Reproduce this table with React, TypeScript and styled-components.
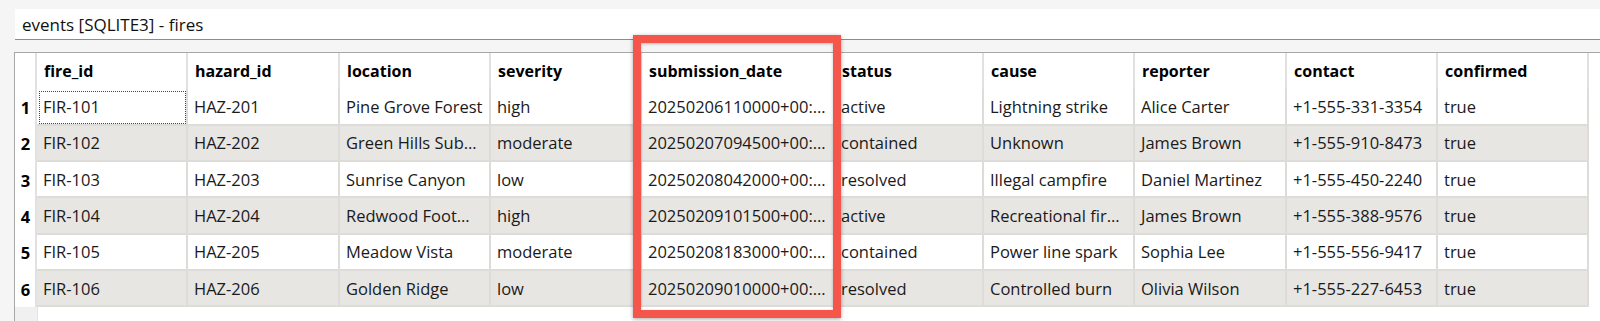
import React from "react";
import styled, { createGlobalStyle } from "styled-components";

const GlobalStyle = createGlobalStyle`
  html, body {
    margin: 0;
    padding: 0;
    background: #f5f5f5;
  }
  body {
    font-family: "Open Sans", "Noto Sans", Arial, sans-serif;
  }
`;

const Page = styled.div`
  position: relative;
  width: 1600px;
  height: 321px;
  overflow: hidden;
  padding-top: 9px;
  box-sizing: border-box;
  display: flex;
  flex-direction: column;
`;

const TitleBar = styled.div`
  margin-left: 15px;
  height: 31px;
  background: #ffffff;
  border-bottom: 1px solid #8c8c8c;
  box-sizing: border-box;
  padding-left: 7px;
  display: flex;
  align-items: center;
  font-size: 17px;
  color: #111;
`;

const TableFrame = styled.div`
  margin-top: 12px;
  margin-left: 14px;
  flex: 1;
  border-top: 1px solid #a7a7a7;
  border-left: 1px solid #a7a7a7;
  background: #ffffff;
  display: flex;
  flex-direction: column;
`;

const Grid = styled.div`
  display: grid;
  grid-template-columns: 22px 151px 152px 151px 151px 193px 149px 151px 152px 151px 151px;
  grid-auto-rows: 36.33px;
`;

const HeaderCell = styled.div`
  display: flex;
  align-items: center;
  padding: 0 7px;
  border-right: 2px solid #e1e1e1;
  box-sizing: border-box;
  font-weight: 700;
  font-size: 16px;
  color: #000;
  white-space: nowrap;
  overflow: hidden;
`;

const RowNumber = styled.div`
  display: flex;
  align-items: center;
  justify-content: center;
  padding-left: 1px;
  border-right: 2px solid #e1e1e1;
  box-sizing: border-box;
  font-weight: 700;
  font-size: 16.5px;
  color: #000;
  background: #ffffff;
`;

const Cell = styled.div<{ $striped: boolean; $focused?: boolean }>`
  display: flex;
  align-items: center;
  padding: 0 6px;
  box-sizing: border-box;
  background: ${(p) => (p.$striped ? "#e8e6e3" : "#ffffff")};
  border-right: 2px solid #dedcd9;
  border-bottom: 2px solid #dedcd9;
  font-size: 16.5px;
  color: #1a1a1a;
  white-space: nowrap;
  overflow: hidden;
  outline: ${(p) => (p.$focused ? "1px dotted #444" : "none")};
  outline-offset: -3px;
`;

const Filler = styled.div`
  flex: 1;
  display: flex;
`;

const FillerHeader = styled.div`
  width: 22px;
  background: #f0f0f0;
  border-right: 1px solid #e4e4e4;
`;

const Highlight = styled.div`
  position: absolute;
  left: 633px;
  top: 35px;
  width: 208px;
  height: 283px;
  box-sizing: border-box;
  border: 8px solid #f5564b;
  box-shadow: 0 1px 4px rgba(0, 0, 0, 0.35), inset 0 1px 3px rgba(0, 0, 0, 0.25);
  pointer-events: none;
`;

const columns = [
  "fire_id",
  "hazard_id",
  "location",
  "severity",
  "submission_date",
  "status",
  "cause",
  "reporter",
  "contact",
  "confirmed",
];

const rows = [
  ["FIR-101", "HAZ-201", "Pine Grove Forest", "high", "20250206110000+00:…", "active", "Lightning strike", "Alice Carter", "+1-555-331-3354", "true"],
  ["FIR-102", "HAZ-202", "Green Hills Sub…", "moderate", "20250207094500+00:…", "contained", "Unknown", "James Brown", "+1-555-910-8473", "true"],
  ["FIR-103", "HAZ-203", "Sunrise Canyon", "low", "20250208042000+00:…", "resolved", "Illegal campfire", "Daniel Martinez", "+1-555-450-2240", "true"],
  ["FIR-104", "HAZ-204", "Redwood Foot…", "high", "20250209101500+00:…", "active", "Recreational fir…", "James Brown", "+1-555-388-9576", "true"],
  ["FIR-105", "HAZ-205", "Meadow Vista", "moderate", "20250208183000+00:…", "contained", "Power line spark", "Sophia Lee", "+1-555-556-9417", "true"],
  ["FIR-106", "HAZ-206", "Golden Ridge", "low", "20250209010000+00:…", "resolved", "Controlled burn", "Olivia Wilson", "+1-555-227-6453", "true"],
];

export default function App() {
  return (
    <>
      <GlobalStyle />
      <Page>
        <TitleBar>events [SQLITE3] - fires</TitleBar>
        <TableFrame>
          <Grid>
            <HeaderCell />
            {columns.map((c) => (
              <HeaderCell key={c}>{c}</HeaderCell>
            ))}
            {rows.map((r, i) => (
              <React.Fragment key={i}>
                <RowNumber>{i + 1}</RowNumber>
                {r.map((v, j) => (
                  <Cell key={j} $striped={i % 2 === 1} $focused={i === 0 && j === 0}>
                    {v}
                  </Cell>
                ))}
              </React.Fragment>
            ))}
          </Grid>
          <Filler>
            <FillerHeader />
          </Filler>
        </TableFrame>
        <Highlight />
      </Page>
    </>
  );
}
